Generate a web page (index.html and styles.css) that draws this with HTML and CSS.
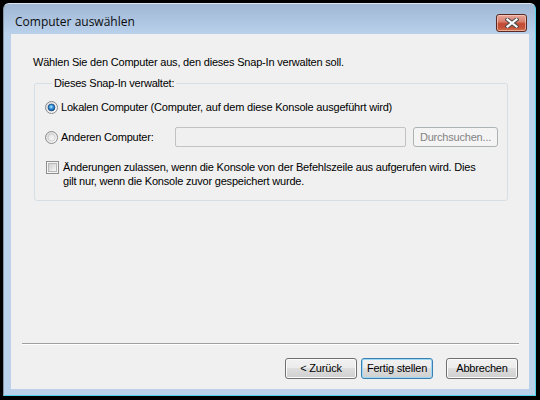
FILE: index.html
```html
<!DOCTYPE html>
<html lang="de">
<head>
<meta charset="utf-8">
<title>Computer auswählen</title>
<link rel="stylesheet" href="styles.css">
</head>
<body>
<div class="window">
  <div class="titlebar">
    <span class="title">Computer auswählen</span>
    <div class="close">
      <svg width="14" height="10" viewBox="0 0 14 10">
        <path d="M2.5 1.5 L11.5 8.5 M11.5 1.5 L2.5 8.5" stroke="#4d4d4d" stroke-width="4.2" stroke-linecap="square" fill="none"/>
        <path d="M2.5 1.5 L11.5 8.5 M11.5 1.5 L2.5 8.5" stroke="#ffffff" stroke-width="2.2" stroke-linecap="square" fill="none"/>
      </svg>
    </div>
  </div>
  <div class="client">
    <p class="intro">Wählen Sie den Computer aus, den dieses Snap-In verwalten soll.</p>
    <fieldset class="group">
      <legend class="legend">Dieses Snap-In verwaltet:</legend>
      <div class="row row-first">
        <svg class="radio" width="13" height="13" viewBox="0 0 13 13">
          <defs>
            <linearGradient id="rb" x1="0" y1="0" x2="1" y2="1">
              <stop offset="0" stop-color="#d6d6d6"/>
              <stop offset="1" stop-color="#ffffff"/>
            </linearGradient>
            <radialGradient id="dot" cx="0.45" cy="0.4" r="0.6">
              <stop offset="0" stop-color="#b8ecff"/>
              <stop offset="0.45" stop-color="#3a9be0"/>
              <stop offset="1" stop-color="#0f4f9a"/>
            </radialGradient>
          </defs>
          <circle cx="6.5" cy="6.5" r="6" fill="url(#rb)" stroke="#8a8c8e"/>
          <circle cx="6.5" cy="6.5" r="3.4" fill="url(#dot)" stroke="#1f4d80" stroke-width="0.8"/>
        </svg>
        <span class="label">Lokalen Computer (Computer, auf dem diese Konsole ausgeführt wird)</span>
      </div>
      <div class="row row-second">
        <svg class="radio" width="13" height="13" viewBox="0 0 13 13">
          <defs>
            <linearGradient id="rb2" x1="0" y1="0" x2="1" y2="1">
              <stop offset="0" stop-color="#d6d6d6"/>
              <stop offset="1" stop-color="#ffffff"/>
            </linearGradient>
            <linearGradient id="rin" x1="0" y1="0" x2="1" y2="1">
              <stop offset="0" stop-color="#e2e2e2"/>
              <stop offset="1" stop-color="#fafafa"/>
            </linearGradient>
          </defs>
          <circle cx="6.5" cy="6.5" r="6" fill="url(#rb2)" stroke="#8a8c8e"/>
          <circle cx="6.5" cy="6.5" r="3.6" fill="url(#rin)" stroke="#c4c4c4" stroke-width="0.8"/>
        </svg>
        <span class="label label-fixed">Anderen Computer:</span>
        <div class="textbox"></div>
        <div class="browse">Durchsuchen...</div>
      </div>
      <div class="row row-check">
        <span class="checkbox"><span class="checkbox-inner"></span></span>
        <span class="check-label">Änderungen zulassen, wenn die Konsole von der Befehlszeile aus aufgerufen wird. Dies<br>gilt nur, wenn die Konsole zuvor gespeichert wurde.</span>
      </div>
    </fieldset>
    <div class="spacer"></div>
    <div class="separator"></div>
    <div class="buttons">
      <div class="btn">&lt; Zurück</div>
      <div class="btn btn-default">Fertig stellen</div>
      <div class="btn btn-cancel">Abbrechen</div>
    </div>
  </div>
</div>
</body>
</html>
```

FILE: styles.css
```css
html, body {
  margin: 0;
  padding: 0;
}
body {
  background: #000;
  width: 540px;
  height: 400px;
  overflow: hidden;
  font-family: "Liberation Sans", Arial, sans-serif;
  font-size: 11px;
  letter-spacing: -0.2px;
  color: #000;
}
.window {
  box-sizing: border-box;
  margin: 3px 0 0 3px;
  width: 533px;
  height: 393px;
  border: 1px solid;
  border-color: #dde6ef #4fd3ea #4fd3ea #8797a8;
  border-radius: 6px 6px 0 0;
  background: linear-gradient(#a1b8d5 0px, #b3cbe6 24px, #b9d1ea 30px, #b9d1ea 100%);
  display: flex;
  flex-direction: column;
  padding: 0 6px 6px 7px;
}
.titlebar {
  height: 30px;
  flex: 0 0 30px;
  box-sizing: border-box;
  padding-top: 10px;
  display: flex;
  align-items: flex-start;
}
.title {
  font-family: "Open Sans", "Noto Sans", sans-serif;
  font-size: 12px;
  letter-spacing: 0;
  line-height: 16px;
  color: #0c0c0c;
  margin-left: 4px;
  flex: 1;
}
.close {
  box-sizing: border-box;
  width: 31px;
  height: 18px;
  margin-right: 2px;
  border: 1px solid #5a2a22;
  border-radius: 3px;
  background: linear-gradient(#e8a698 0%, #d98270 40%, #c24a32 55%, #c5533a 80%, #d47650 100%);
  box-shadow: inset 0 0 0 1px rgba(255, 220, 210, 0.55);
  display: flex;
  align-items: center;
  justify-content: center;
}
.client {
  flex: 1;
  background: #f0f0f0;
  display: flex;
  flex-direction: column;
}
.intro {
  margin: 22px 0 0 22px;
  line-height: 13px;
}
.group {
  margin: 8px 0 0 23px;
  width: 474px;
  box-sizing: border-box;
  border: 1px solid #d5dfe5;
  border-radius: 3px;
  padding: 11px 9px 12px 10px;
  min-width: 0;
}
.legend {
  margin-left: 7px;
  padding: 0 2px;
  line-height: 13px;
}
.row {
  display: flex;
  align-items: center;
}
.row-first {
  height: 13px;
}
.row-second {
  margin-top: 13px;
  height: 20px;
}
.radio {
  flex: 0 0 13px;
  display: block;
}
.label {
  margin-left: 3px;
  line-height: 13px;
  white-space: nowrap;
}
.label-fixed {
  flex: 0 0 114px;
}
.textbox {
  box-sizing: border-box;
  width: 231px;
  height: 20px;
  border: 1px solid #c2c2c2;
  border-radius: 2px;
  background: #f0f0f0;
}
.browse {
  box-sizing: border-box;
  margin-left: 7px;
  width: 85px;
  height: 20px;
  border: 1px solid #adb2b5;
  border-radius: 3px;
  background: #f4f4f4;
  color: #838383;
  line-height: 18px;
  text-align: center;
}
.row-check {
  margin-top: 14px;
  align-items: flex-start;
}
.checkbox {
  box-sizing: border-box;
  flex: 0 0 13px;
  width: 13px;
  height: 13px;
  margin: 0 0 0 1px;
  border: 1px solid #8e8f8f;
  background: #f4f4f4;
  padding: 1px;
}
.checkbox-inner {
  display: block;
  width: 9px;
  height: 9px;
  box-sizing: border-box;
  border: 1px solid #b8b8b8;
  background: linear-gradient(135deg, #cfcfcf, #f6f6f6);
}
.check-label {
  margin-left: 4px;
  line-height: 14px;
  margin-top: -1px;
}
.spacer {
  flex: 1;
}
.separator {
  margin: 0 10px 0 11px;
  height: 1px;
  background: #a0a0a0;
  border-bottom: 1px solid #ffffff;
}
.buttons {
  display: flex;
  justify-content: flex-end;
  margin: 13px 11px 10px 0;
  gap: 4px;
}
.btn {
  box-sizing: border-box;
  width: 72px;
  height: 21px;
  border: 1px solid #707070;
  border-radius: 3px;
  background: linear-gradient(#f2f2f2 0%, #ebebeb 50%, #dddddd 50%, #cfcfcf 100%);
  box-shadow: inset 0 0 0 1px #fbfbfb;
  line-height: 19px;
  text-align: center;
  white-space: nowrap;
}
.btn-default {
  border-color: #3c7fb1;
  box-shadow: inset 0 0 0 1px #9fd8f4;
}
.btn-cancel {
  margin-left: 9px;
}
```
